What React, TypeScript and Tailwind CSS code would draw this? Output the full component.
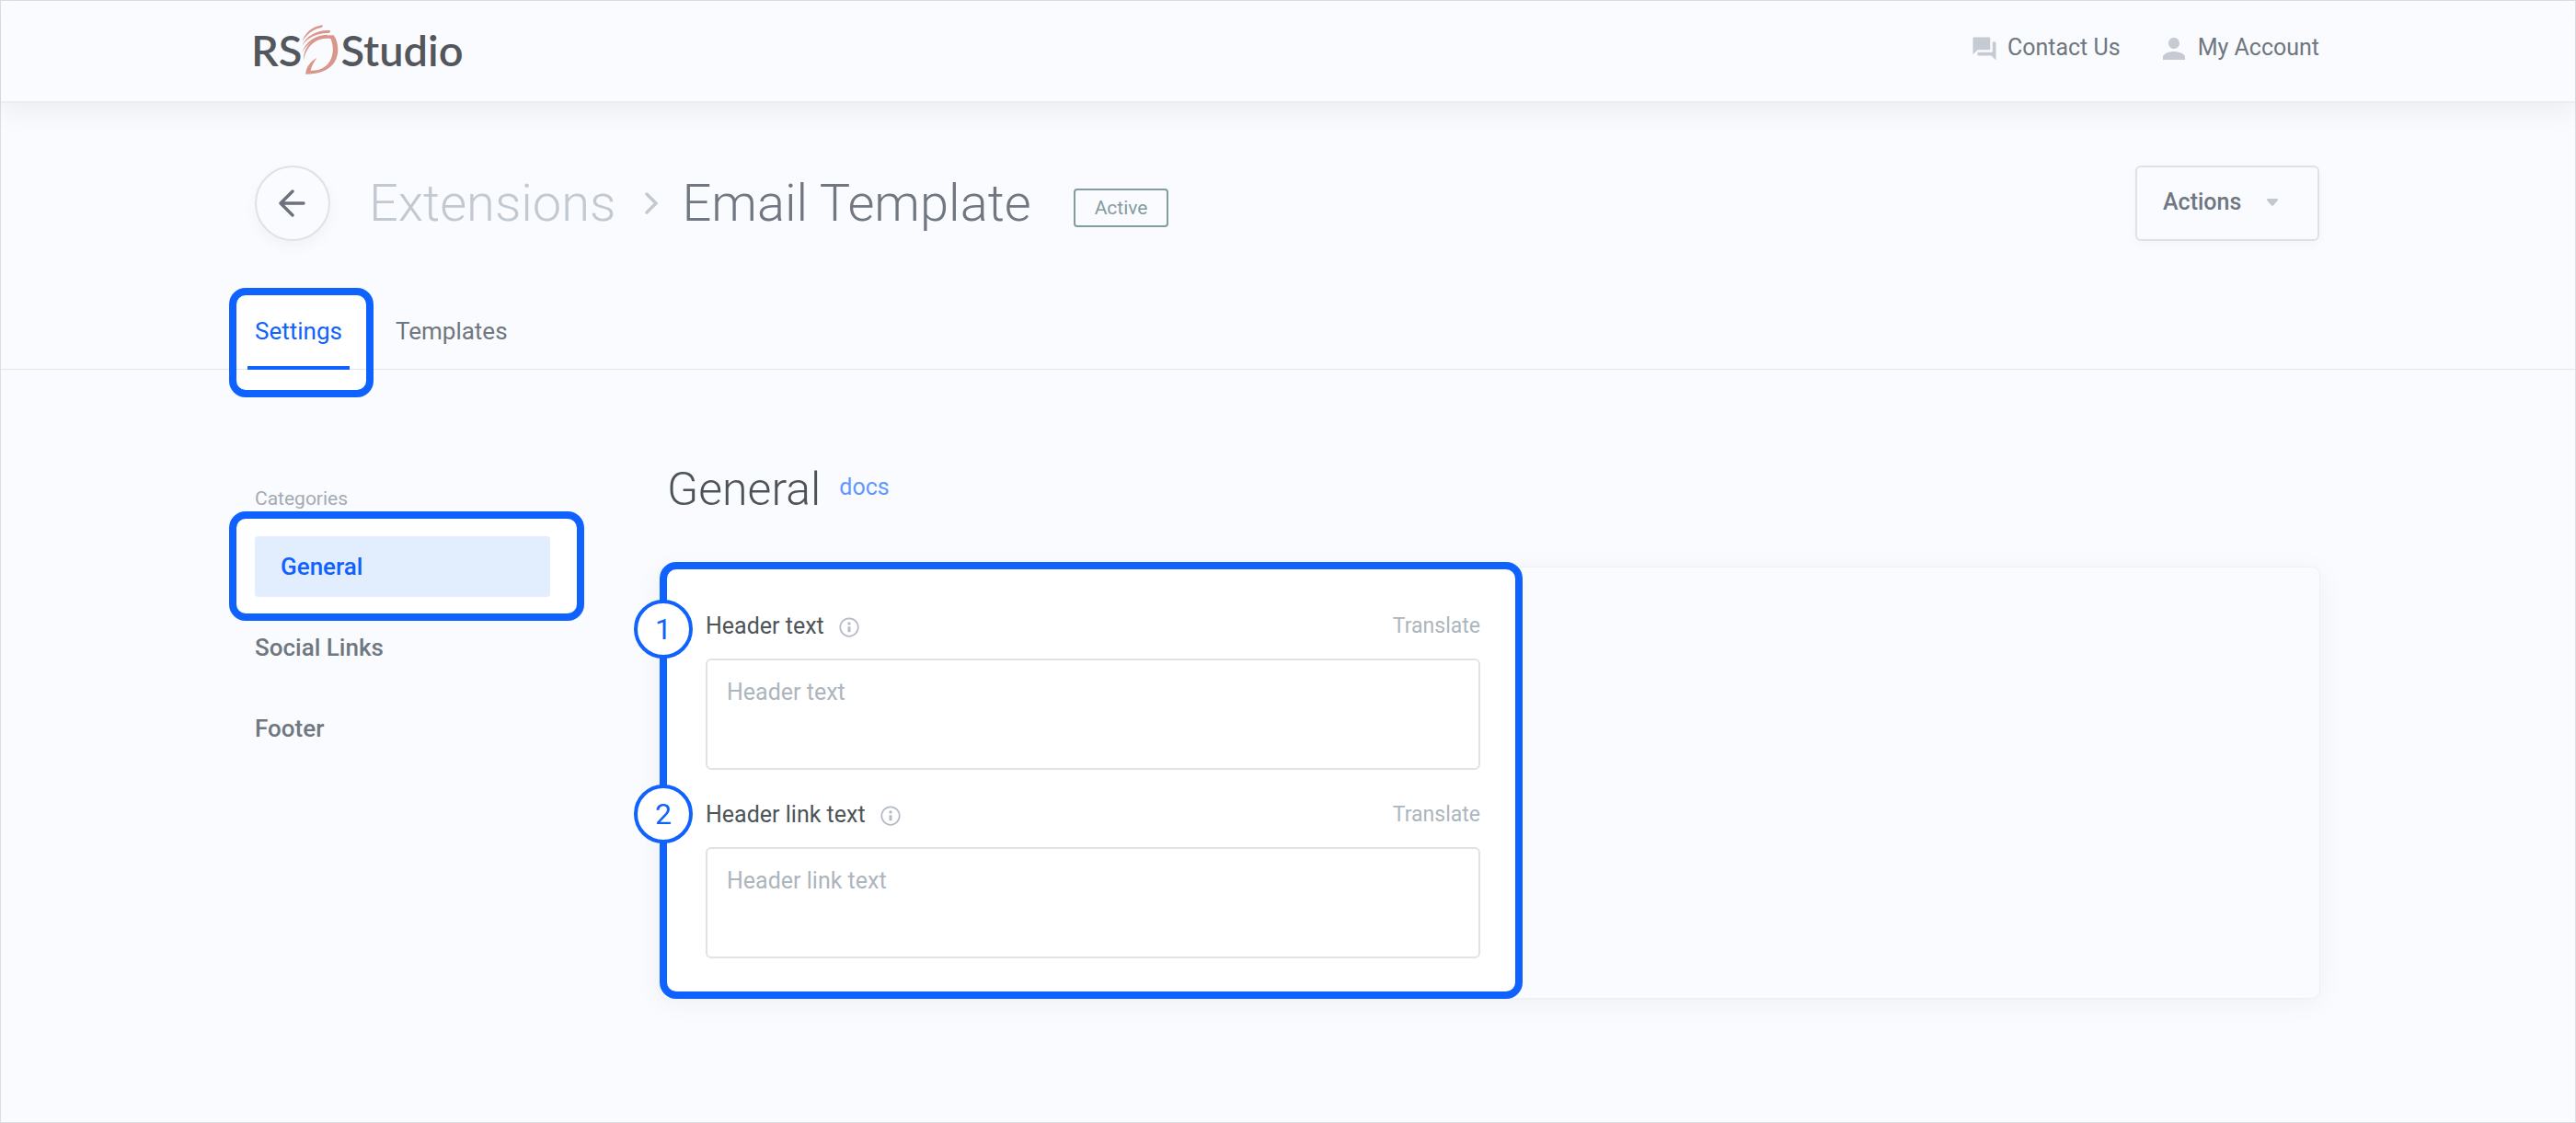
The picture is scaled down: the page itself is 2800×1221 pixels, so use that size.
import { MdPerson, MdQuestionAnswer } from "react-icons/md";

function Logo() {
  return (
    <a
      href="#home"
      aria-label="RS Studio"
      className="mb-1 flex items-center font-['Lato',sans-serif] text-[47px] leading-[54px] font-semibold text-[#53575c]"
    >
      <span className="-ml-1">RS</span>
      <svg viewBox="0 0 120 162" className="h-[54px] w-10" fill="#d9968a" aria-hidden="true">
        <path d="M2 54C10 27 35 4 68 1C70 4 68 8 60 10C36 14 14 34 2 54Z" />
        <path d="M1 68C14 36 50 15 92 18C95 22 92 27 84 27C48 27 20 42 1 68Z" />
        <path d="M1 90C12 56 44 33 84 32L80 39C48 42 18 60 1 90Z" />
        <path d="M6 117C4 78 34 28 104 34C128 66 134 160 13 161C12 142 26 120 50 107C40 120 32 134 29 149C94 152 114 90 94 45C46 37 12 74 6 117Z" />
      </svg>
      <span className="ml-0.5">Studio</span>
    </a>
  );
}

function InfoIcon() {
  return (
    <svg viewBox="0 0 22 22" className="mt-0.5 size-[22px] text-[#b6bcc6]" fill="none" stroke="currentColor" aria-hidden="true">
      <circle cx="11" cy="11" r="9.75" strokeWidth="1.75" />
      <path d="M11 5.500v3M11 10.200v6" strokeWidth="3" />
    </svg>
  );
}

type FieldProps = { id: string; label: string; step: number; badgeClass: string };

function Field({ id, label, step, badgeClass }: FieldProps) {
  return (
    <div className="relative">
      <span
        className={`absolute -left-[78px] flex size-16 items-center justify-center rounded-full border-4 border-[#0f62fe] bg-white text-[32px] leading-none text-[#0f62fe] ${badgeClass}`}
      >
        {step}
      </span>
      <div className="flex items-center leading-[30px]">
        <label htmlFor={id} className="text-[#4d5459]">
          {label}
        </label>
        <button type="button" aria-label={`About ${label}`} className="ml-4">
          <InfoIcon />
        </button>
        <button type="button" className="ml-auto text-[23px] text-[#adb5bd]">
          Translate
        </button>
      </div>
      <textarea
        id={id}
        placeholder={label}
        className="mt-5 block h-[121px] w-full resize-none rounded-md border-2 border-[#e0e2e8] bg-white px-[21px] py-5 leading-[30px] text-[#4d5459] placeholder:text-[#adb5bd]"
      />
    </div>
  );
}

export default function App() {
  return (
    <div className="flex min-h-screen flex-col border border-[#dcdee3] bg-[#fafbff] font-['Roboto',sans-serif] text-[25px] text-[#6f7780]">
      <header className="border-b-2 border-[#ecedf1] shadow-[0_10px_30px_rgba(0,0,0,0.06)]">
        <div className="mx-auto flex h-[109px] w-full max-w-[2246px] items-center justify-between pr-0.5">
          <Logo />
          <nav className="mb-2 flex items-center gap-10 leading-[30px]">
            <a href="#contact" className="flex items-center gap-2.5">
              <MdQuestionAnswer className="mt-0.5 size-[30px] text-[#c5cad3]" />
              Contact Us
            </a>
            <a href="#account" className="flex items-center gap-2">
              <MdPerson className="mt-0.5 size-9 text-[#c5cad3]" />
              My Account
            </a>
          </nav>
        </div>
      </header>

      <div className="mx-auto mt-[68px] flex w-full max-w-[2246px] items-center pr-0.5">
        <a
          href="#extensions"
          aria-label="Back"
          className="flex size-[82px] items-center justify-center rounded-full border-2 border-[#dfe1e7] shadow-[0_6px_16px_rgba(0,0,0,0.04)]"
        >
          <svg viewBox="0 0 30 30" className="size-[30px]" fill="none" stroke="#6c727c" strokeWidth="3.4" strokeLinecap="round" strokeLinejoin="round" aria-hidden="true">
            <path d="M27 15H2M15 2L2 15L15 28" />
          </svg>
        </a>
        <h1 className="ml-[42px] flex items-center text-[56px] leading-[66px] font-light">
          <a href="#extensions" className="text-[#c3c9d1]">
            Extensions
          </a>
          <svg viewBox="0 0 14 24" className="mr-[26px] ml-8 h-6 w-3.5" fill="none" stroke="#c3c9d1" strokeWidth="3.4" strokeLinecap="round" aria-hidden="true">
            <path d="M2 2L12 12L2 22" />
          </svg>
          <span className="text-[#717780]">Email Template</span>
        </h1>
        <span className="mt-2.5 ml-[46px] flex h-[42px] items-center rounded border-2 border-[#849b9f] px-[21px] text-[21px] leading-6 text-[#849b9f]">
          Active
        </span>
        <button
          type="button"
          className="ml-auto flex h-[82px] w-[200px] items-center gap-7 rounded-md border-2 border-[#dfe1e7] px-7 pb-0.5 font-medium shadow-[0_4px_12px_rgba(0,0,0,0.03)]"
        >
          Actions
          <svg viewBox="0 0 12 8" className="h-2 w-3" fill="#c3c9d1" aria-hidden="true">
            <path d="M1.500 0h9c1.300 0 2 1.200 1 2.200L7.200 7.200c-.7.8-1.700.8-2.400 0L.5 2.200C-.5 1.200.2 0 1.500 0Z" />
          </svg>
        </button>
      </div>

      <nav className="mt-[51px] border-b border-[#e3e5ea] text-[26px]">
        <div className="mx-auto flex w-full max-w-[2246px] items-start">
          <div className="relative -mb-[31px] -ml-7 rounded-[18px] border-8 border-[#0f62fe] bg-white pb-[22px]">
            <div className="flex border-b border-[#e3e5ea] pr-[18px] pl-3">
              <a
                href="#settings"
                className="-mb-px flex h-[81px] items-center border-b-4 border-[#0f62fe] px-2 pt-0.5 text-[#0f62fe]"
              >
                Settings
              </a>
            </div>
          </div>
          <a href="#templates" className="ml-6 flex h-[88px] items-center pt-1.5">
            Templates
          </a>
        </div>
      </nav>

      <main className="mx-auto flex w-full max-w-[2246px] pt-[100px] pr-0.5">
        <aside className="w-[440px] shrink-0 pt-[26px] text-[26px] font-medium">
          <h2 className="text-[21px] leading-7 font-normal text-[#a4abb3]">Categories</h2>
          <div className="-ml-7 w-[386px] rounded-[18px] border-8 border-[#0f62fe] bg-white pt-[19px] pr-[29px] pb-[18px] pl-5">
            <a href="#general" className="flex h-[66px] items-center rounded bg-[#e2eefd] px-7 text-[#0f62fe]">
              General
            </a>
          </div>
          <div className="flex flex-col gap-[30px]">
            <a href="#social" className="flex h-[58px] items-center">
              Social Links
            </a>
            <a href="#footer" className="flex h-[58px] items-center">
              Footer
            </a>
          </div>
        </aside>

        <section className="min-w-0 flex-1">
          <div className="flex items-center pl-2">
            <h2 className="text-[50px] leading-[60px] font-light text-[#4d5459]">General</h2>
            <a href="#docs" className="mb-1 ml-5 text-[#6197ff]">
              docs
            </a>
          </div>
          <div className="mt-[55px] flex rounded-lg shadow-[0_0_2px_rgba(0,0,0,0.1),0_4px_30px_rgba(0,0,0,0.05)]">
            <form className="-mt-1.5 -mb-px flex w-full max-w-[938px] flex-col gap-[34px] rounded-[18px] border-8 border-[#0f62fe] bg-white pt-[47px] pr-[38px] pb-9 pl-[42px]">
              <Field id="header-text" label="Header text" step={1} badgeClass="-top-3.5" />
              <Field id="header-link-text" label="Header link text" step={2} badgeClass="-top-[18px]" />
            </form>
          </div>
        </section>
      </main>
    </div>
  );
}
